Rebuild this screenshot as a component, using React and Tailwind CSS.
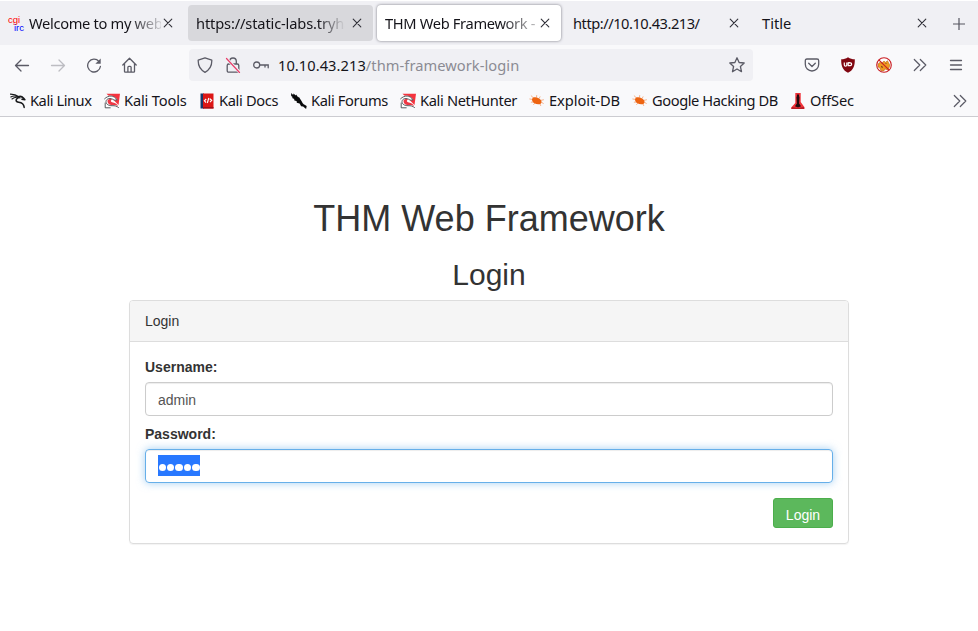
const chromeFont = "font-['Noto_Sans',sans-serif]";
const pageFont = "font-['Liberation_Sans',Arial,sans-serif]";

function Close({ className = '' }) {
  return (
    <svg className={`size-[10px] shrink-0 ${className}`} viewBox="0 0 10 10" fill="none" stroke="#303038" strokeWidth="1.1" strokeLinecap="round">
      <path d="M1.2 1.2 8.8 8.8M8.8 1.2 1.2 8.8" />
    </svg>
  );
}

function Chevrons() {
  return (
    <svg className="size-4 shrink-0" viewBox="0 0 16 16" fill="none" stroke="#5b5b66" strokeWidth="1.2" strokeLinecap="round" strokeLinejoin="round">
      <path d="m2.3 2.5 5.5 5.5-5.5 5.5M8.3 2.5 13.8 8l-5.5 5.5" />
    </svg>
  );
}

function DragonIcon() {
  return (
    <svg className="size-4" viewBox="0 0 16 16" fill="none" stroke="#18191b" strokeLinecap="round" strokeLinejoin="round">
      <path strokeWidth="1.1" d="M.5 1.1 5 1.8l4 1.9M.8 3.9C4 2.3 7 3 10 5M2 6c2-1.7 4-2 6.5-1.5" />
      <path strokeWidth="1.5" d="M8.5 3.7c2-.8 3.6-.2 5.2 1.6l1.2 1.4-3-.5M8.7 4.6C5 6 5.5 9 8.7 9.3c3.5.4 5.1 1.4 5.5 5.1" />
    </svg>
  );
}

function ToolsIcon() {
  return (
    <svg className="size-4" viewBox="0 0 16 16" fill="none">
      <path fill="#f5333e" d="M2.5.8H16L14.5 12l-3-3z" />
      <path fill="#fff" d="M.5 5.5C4 1 10 1.5 13.5 7l-4 .5L15 14l-5-1-8 2C.5 12 .5 9 .5 5.5z" />
      <path fill="#ee3845" d="M3.5 7.5C5 5.8 7 5.6 8.5 6.6 6 7.5 6.5 9 9 9.6c2.5.4 4.3 1.6 5 3.4-3-1.3-5-.6-7-1C4.8 11.500 3.300 9.800 3.500 7.500z" />
      <path stroke="#45474c" strokeWidth=".9" strokeLinecap="round" strokeLinejoin="round" d="M.6 5.800C4.500 1.800 10 2 13.200 7l-3.200.1C6.500 4.300 2.200 5.500 2 8.500c0 3 3 4.300 6 4.200 3-.1 4.500.3 6.500 1.800M1.200 10v4.800h5" />
    </svg>
  );
}

function DocsIcon() {
  return (
    <svg className="size-4" viewBox="0 0 16 16">
      <path fill="#17386b" d="M1.5.5H5v15H1.5z" />
      <path fill="#dc1716" d="M4 .5h10.5v15H4z" />
      <path fill="#9f1119" d="M4 14h10.5v1.5H4z" />
      <path fill="none" stroke="#fff" strokeWidth="1.15" d="M7.2 6 5.4 7.8 7 9.5M10.8 5.7l1.9 1.7-1.7 1.8M9.8 5 8.3 10" />
    </svg>
  );
}

function ForumsIcon() {
  return (
    <svg className="size-4" viewBox="0 0 16 16" fill="#08090a">
      <path d="M.1.1 2.2 2 2.4.6l2.5 2 .2-1.2 2.2 3 .5-.6 3 4.7c.8 2.5 2.5 3 4.9 4.6l-.6 2.8-3-2.5-2-.2-1.5-2.6-2.8-.8-.1-1.5-2.6-1.1.2-1.1L1.1 5l.5-.9L.2 3z" />
    </svg>
  );
}

function BugIcon() {
  return (
    <svg className="size-4" viewBox="0 0 16 16">
      <path fill="#ee6411" d="M4.2 4.400c3-.9 6.700.6 8 3.200.9 2.200-.3 3.800-2.400 3.700-3 .2-5.800-1.300-6.600-3.600-.4-1.300 0-2.700 1-3.300z" />
      <path fill="none" stroke="#ee6411" strokeOpacity=".6" strokeWidth=".8" strokeLinecap="round" d="M4.5 5 2.2 2.8M3.7 6.5.8 6M4.5 9l-2.2.2M6 10.2l-1.4 1.2M7.5 4.2l.2-1.7M10.3 5.2 11 3.8M12.2 7.3l2.3-.5M12.500 9.300l1.800 1.100M11 11l.7 1.600" />
    </svg>
  );
}

function OffSecIcon() {
  return (
    <svg className="size-4" viewBox="0 0 16 16">
      <path fill="#ef3239" d="M5.3 0h5.4v9l3.8 5.3V16H1.2v-1.5L5.3 10z" />
      <path fill="#220c10" d="M7 1.4h2v1.8l.5.8-.4 6.5 1.9 2.700-3 1.200-3-1.200 1.900-2.700L6.500 4l.5-.8z" />
      <path fill="#b81d26" d="M2 14c3 1 8 1 12 0v2H1.5z" />
    </svg>
  );
}

const bookmarks = [
  { label: 'Kali Linux', Icon: DragonIcon, width: 'w-[94px]', tracking: 'tracking-[-0.45px]' },
  { label: 'Kali Tools', Icon: ToolsIcon, width: 'w-[95px]', tracking: 'tracking-[-0.17px]' },
  { label: 'Kali Docs', Icon: DocsIcon, width: 'w-[92px]', tracking: 'tracking-[-0.35px]' },
  { label: 'Kali Forums', Icon: ForumsIcon, width: 'w-[109px]', tracking: 'tracking-[-0.36px]' },
  { label: 'Kali NetHunter', Icon: ToolsIcon, width: 'w-[129px]', tracking: 'tracking-[-0.35px]' },
  { label: 'Exploit-DB', Icon: BugIcon, width: 'w-[103px]', tracking: 'tracking-[-0.05px]' },
  { label: 'Google Hacking DB', Icon: BugIcon, width: 'w-[158px]', tracking: 'tracking-[-0.42px]' },
  { label: 'OffSec', Icon: OffSecIcon, width: 'w-[90px]', tracking: 'tracking-[-0.15px]' },
];

function TabBar() {
  return (
    <div className="flex h-[44px] gap-[4px] bg-[#f0f0f4] py-[4px] text-[14.67px]">
      <div className="flex w-[184px] shrink-0 items-center pl-2">
        <span className="flex w-[18px] shrink-0 flex-col pt-px font-['Liberation_Sans',sans-serif] text-[9.5px] leading-[8px]">
          <span className="text-[#ff0000]">cgi</span>
          <span className="pl-[6px] text-[#0000ff]">irc</span>
        </span>
        <span className="ml-[3px] w-[132px] overflow-hidden whitespace-nowrap tracking-[-0.32px] [mask-image:linear-gradient(to_right,#000_76%,transparent_104%)]">Welcome to my webpage</span>
        <Close className="ml-[2px]" />
      </div>
      <div className="flex w-[185px] shrink-0 items-center rounded-[4px] bg-[#d8d8dc] pl-2">
        <span className="w-[149px] overflow-hidden whitespace-nowrap tracking-[-0.15px] [mask-image:linear-gradient(to_right,#000_82%,transparent_100%)]">https://static-labs.tryhackme</span>
        <Close className="ml-[7px]" />
      </div>
      <div className="flex w-[184px] shrink-0 items-center rounded-[4px] bg-white pl-2 shadow-[0_0_3px_#777780]">
        <span className="w-[152px] overflow-hidden whitespace-nowrap tracking-[-0.34px] [mask-image:linear-gradient(to_right,#000_76%,transparent_108%)]">THM Web Framework - Login</span>
        <Close className="ml-[3px]" />
      </div>
      <div className="flex w-[185px] shrink-0 items-center pl-2">
        <span className="w-[156px] whitespace-nowrap tracking-[-0.48px]">http://10.10.43.213/</span>
        <Close />
      </div>
      <div className="flex w-[184px] shrink-0 items-center pl-2">
        <span className="w-[155px]">Title</span>
        <Close />
      </div>
      <svg className="mt-[12px] ml-[10px] size-[14px] shrink-0" viewBox="0 0 14 14" fill="none" stroke="#55555f" strokeWidth="1.2">
        <path d="M7 1v12M1 7h12" />
      </svg>
    </div>
  );
}

function NavBar() {
  return (
    <div className="flex h-[40px] items-center text-[14.67px]">
      <div className="flex w-[189px] shrink-0 items-center gap-5 pl-[14px]">
        <svg className="size-4" viewBox="0 0 16 16" fill="none" stroke="#5b5b66" strokeWidth="1.3" strokeLinecap="round" strokeLinejoin="round">
          <path d="M14.5 8.5H1.5M7 3 1.5 8.5 7 14" />
        </svg>
        <svg className="size-4" viewBox="0 0 16 16" fill="none" stroke="#bdbdc2" strokeWidth="1.3" strokeLinecap="round" strokeLinejoin="round">
          <path d="M1.5 8.5h13M9 3l5.5 5.5L9 14" />
        </svg>
        <svg className="size-4" viewBox="0 0 16 16" fill="none" stroke="#5b5b66" strokeWidth="1.3" strokeLinecap="round">
          <path d="M12.9 4.4A6.4 6.4 0 1 0 14.4 9.5" />
          <path d="M14.7 1.5v5.3H9.4z" fill="#5b5b66" stroke="none" />
        </svg>
        <svg className="size-4" viewBox="0 0 16 16" fill="none" stroke="#5b5b66" strokeWidth="1.3" strokeLinecap="round" strokeLinejoin="round">
          <path d="M.8 8 7.5 1.2 14.2 8M2.5 6.5v7.9c0 .5.3.8.8.8h8.4c.5 0 .8-.3.8-.8V6.5M5.9 15v-4.8c0-.6.3-.9.9-.9h1.4c.6 0 .9.3.9.9V15" />
        </svg>
      </div>
      <div className="flex h-8 w-[564px] shrink-0 items-center rounded-[4px] bg-[#f0f0f4] pl-2">
        <svg className="size-4 shrink-0" viewBox="0 0 16 16" fill="none" stroke="#5b5b66" strokeWidth="1.3" strokeLinejoin="round">
          <path d="M8 .8 14.8 3.2C15 9 12 13.2 8 15.3 4 13.2 1 9 1.2 3.2z" />
        </svg>
        <svg className="ml-3 size-4 shrink-0" viewBox="0 0 16 16" fill="none" strokeLinecap="round">
          <path stroke="#5b5b66" strokeWidth="1.3" d="M4.7 6.8V4.3a3.3 3.3 0 0 1 6.6 0v2.5M3.7 7h8.6c.9 0 1.5.6 1.5 1.5v5.2c0 .9-.6 1.5-1.5 1.5H3.7c-.9 0-1.5-.6-1.5-1.5V8.5c0-.9.6-1.5 1.5-1.5z" />
          <path stroke="#f0f0f4" strokeWidth="3" d="m2 2 12.5 13" />
          <path stroke="#e83f6b" strokeWidth="1.2" d="m1.5 1.5 13 14" />
        </svg>
        <svg className="ml-3 size-4 shrink-0" viewBox="0 0 16 16" fill="none" stroke="#5b5b66" strokeWidth="1.3" strokeLinecap="round">
          <circle cx="3.7" cy="8" r="3" />
          <path d="M7 8h8.2v2.8M12 8v2" />
        </svg>
        <span className="ml-[9px] grow pb-px whitespace-nowrap tracking-[0.05px] text-[#15141a]">10.10.43.213<span className="text-[#8b8b93]">/thm-framework-login</span></span>
        <svg className="mr-2 size-4 shrink-0" viewBox="0 0 16 16" fill="none" stroke="#5b5b66" strokeWidth="1.3" strokeLinejoin="round">
          <path d="m8 .8 2.1 4.7 5.1.5-3.8 3.5 1.1 5.2L8 12l-4.500 2.700 1.100-5.200L.8 6l5.100-.5z" />
        </svg>
      </div>
      <div className="ml-[51px] flex shrink-0 items-center gap-5">
        <svg className="size-4" viewBox="0 0 16 16" fill="none" stroke="#5b5b66" strokeWidth="1.3" strokeLinecap="round" strokeLinejoin="round">
          <path d="M3 2h10c1.2 0 1.7.6 1.7 1.7v3.6a6.7 6.7 0 0 1-13.4 0V3.7C1.3 2.6 1.8 2 3 2zM4.7 6.3 8 9.5l3.3-3.2" />
        </svg>
        <svg className="size-4" viewBox="0 0 16 16">
          <path fill="#800610" d="M8 .2c2.1 1.4 4.2 2 6.8 2C15 9.5 13 13.2 8 15.8 3 13.2 1 9.5 1.2 2.2 3.8 2.2 5.9 1.6 8 .2z" />
          <path fill="none" stroke="#fff" strokeWidth="1.2" d="M4.3 5.6V8c0 1.5 2.5 1.5 2.5 0V5.6M8.2 5.8v2.9h1c3.2 0 3.2-3 0-3z" />
        </svg>
        <svg className="size-4" viewBox="0 0 16 16" fill="none">
          <circle cx="8" cy="8" r="7.3" fill="#fff" />
          <path fill="#ef9a22" stroke="#ad5c20" strokeWidth=".5" d="m2 7 2-1.7 1.5 1L8 4l1.5 1.3 2-1.6 1.3 2.5 1.2 1.7-1 3-1.4 2-2.7-1-1 2-3-.2L4 11 2 10z" />
          <path fill="#87421d" d="m5 8.8 2 1-.6 1.4L5 10zM9.5 6h1v1h-1z" />
          <circle cx="8" cy="8" r="7.3" stroke="#c91c22" strokeWidth="1.1" />
          <path stroke="#c91c22" strokeWidth="1.1" d="m2.8 2.8 10.4 10.4" />
        </svg>
        <Chevrons />
        <svg className="size-4" viewBox="0 0 16 16" stroke="#5b5b66" strokeWidth="1.3" strokeLinecap="round">
          <path d="M2.5 3.5h11M2.5 8h11M2.5 12.5h11" />
        </svg>
      </div>
    </div>
  );
}

export default function App() {
  return (
    <div className={`flex h-[631px] w-[978px] flex-col overflow-hidden bg-white pt-px text-[#15141a] ${chromeFont}`}>
      <TabBar />
      <header className="flex h-[72px] shrink-0 flex-col border-b border-[#ccccd1] bg-[#f9f9fb]">
        <NavBar />
        <div className="flex h-[31px] items-center pl-[10px] text-[14.67px]">
          {bookmarks.map(({ label, Icon, width, tracking }) => (
            <div key={label} className={`flex shrink-0 items-center gap-1 whitespace-nowrap ${width} ${tracking}`}>
              <Icon />
              <span className="pb-[2px]">{label}</span>
            </div>
          ))}
          <span className="ml-[72px]"><Chevrons /></span>
        </div>
      </header>

      <main className={`flex flex-col items-center pt-[82px] text-[14px] leading-5 text-[#333] ${pageFont}`}>
        <h1 className="text-[36px] leading-[40px]">THM Web Framework</h1>
        <h2 className="mt-[19px] text-[30px] leading-[33px]">Login</h2>
        <section className="mt-[9px] h-[244px] w-[720px] rounded-[4px] border border-[#ddd] shadow-[0_1px_1px_rgba(0,0,0,0.05)]">
          <div className="h-[41px] rounded-t-[3px] border-b border-[#ddd] bg-[#f5f5f5] px-[15px] py-[10px]">Login</div>
          <form className="flex flex-col px-[15px] pt-[15px]">
            <label className="mb-[5px] font-bold" htmlFor="username">Username:</label>
            <input id="username" defaultValue="admin" className="h-[34px] rounded-[4px] border border-[#ccc] px-3 pt-[2px] text-[#555] shadow-[inset_0_1px_1px_rgba(0,0,0,0.075)]" />
            <span className="mt-[8px] mb-[5px] font-bold">Password:</span>
            <div className="flex h-[34px] items-start rounded-[4px] border border-[#66afe9] px-3 pt-[5px] shadow-[inset_0_1px_1px_rgba(0,0,0,0.075),0_0_8px_rgba(102,175,233,0.6)]">
              <span className="flex h-[21px] w-[42px] items-center bg-[#2878ff] pt-[4px] pl-[0.7px]">
                {[0, 1, 2, 3, 4].map((dot) => (
                  <i key={dot} className="mr-[1px] size-[7.4px] shrink-0 rounded-full bg-white" />
                ))}
              </span>
            </div>
            <button type="button" className="mt-[15px] h-[30px] w-[60px] self-end rounded-[3px] border border-[#4cae4c] bg-[#5cb85c] pt-[3px] text-[14px] text-white">Login</button>
          </form>
        </section>
      </main>
    </div>
  );
}
